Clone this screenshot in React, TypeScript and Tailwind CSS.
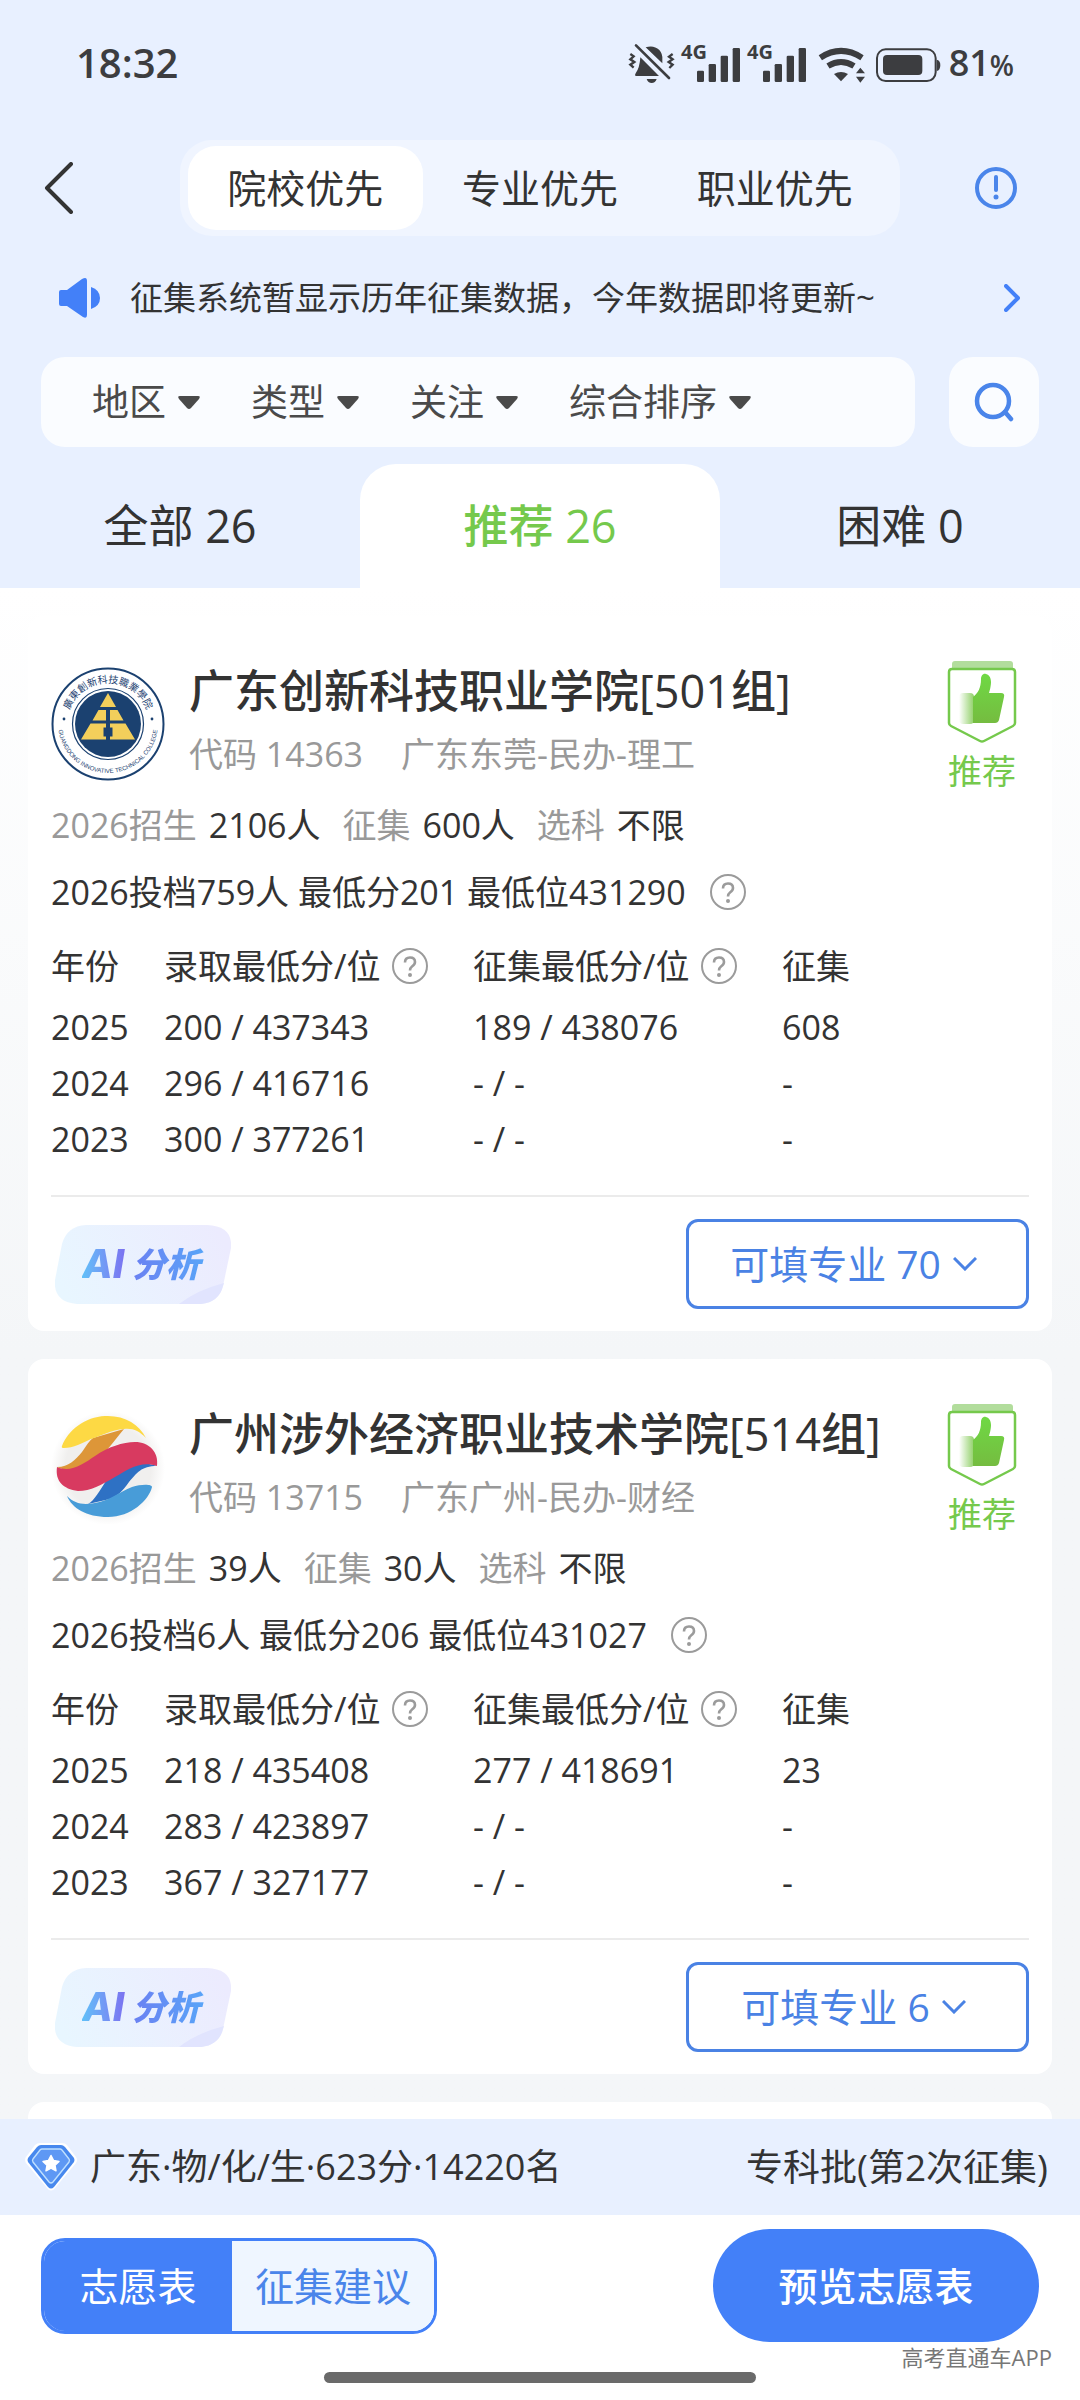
import { useState } from "react"
import type { ReactNode } from "react"
import clsx from "clsx"

type YearRow = {
  year: string
  admitted: string
  collected: string
  count: string
}

type College = {
  name: string
  code: string
  tags: string
  plan: string
  collect: string
  subject: string
  summary: string
  majors: number
  logo: ReactNode
  rows: YearRow[]
}

const COLLEGES: College[] = [
  {
    name: "广东创新科技职业学院[501组]",
    code: "14363",
    tags: "广东东莞-民办-理工",
    plan: "2106人",
    collect: "600人",
    subject: "不限",
    summary: "2026投档759人 最低分201 最低位431290",
    majors: 70,
    logo: <InnovativeLogo />,
    rows: [
      { year: "2025", admitted: "200 / 437343", collected: "189 / 438076", count: "608" },
      { year: "2024", admitted: "296 / 416716", collected: "- / -", count: "-" },
      { year: "2023", admitted: "300 / 377261", collected: "- / -", count: "-" },
    ],
  },
  {
    name: "广州涉外经济职业技术学院[514组]",
    code: "13715",
    tags: "广东广州-民办-财经",
    plan: "39人",
    collect: "30人",
    subject: "不限",
    summary: "2026投档6人 最低分206 最低位431027",
    majors: 6,
    logo: <ForeignEconomicLogo />,
    rows: [
      { year: "2025", admitted: "218 / 435408", collected: "277 / 418691", count: "23" },
      { year: "2024", admitted: "283 / 423897", collected: "- / -", count: "-" },
      { year: "2023", admitted: "367 / 327177", collected: "- / -", count: "-" },
    ],
  },
]

const MODES = ["院校优先", "专业优先", "职业优先"]
const FILTERS = ["地区", "类型", "关注", "综合排序"]
const TABS = [
  { label: "全部", count: 26 },
  { label: "推荐", count: 26 },
  { label: "困难", count: 0 },
]

function StatusIcons() {
  return (
    <svg viewBox="0 0 312 42" className="h-[42px] w-[312px] overflow-visible" fill="#3c3d40" aria-hidden="true">
      <g transform="scale(0.33333) translate(-84 -60)">
        {/* muted bell */}
        <path d="M134 76Q158 68 175 84Q185 95 184 112V124Z" />
        <path d="M118 106L174 162H104Q100 160 104 154Q116 138 118 106Z" />
        <path d="M137 171H167Q163 183 152 183Q141 183 137 171Z" />
        <path d="M105 70L204 168" stroke="#3c3d40" strokeWidth="8" strokeLinecap="round" />
        <path
          d="M88 96L98 103L88 112L100 120L88 128L98 137M215 96L204 104L215 112L203 120L215 128L205 138"
          fill="none"
          stroke="#3c3d40"
          strokeWidth="7"
        />
        {/* signal bars */}
        <rect x="288" y="146" width="21" height="34" rx="4" />
        <rect x="323" y="126" width="22" height="54" rx="4" />
        <rect x="359" y="101" width="22" height="79" rx="4" />
        <rect x="395" y="78" width="22" height="102" rx="4" />
        <rect x="486" y="146" width="21" height="34" rx="4" />
        <rect x="521" y="126" width="22" height="54" rx="4" />
        <rect x="557" y="101" width="22" height="79" rx="4" />
        <rect x="593" y="78" width="22" height="102" rx="4" />
        {/* wifi */}
        <path d="M658 107Q720 66 783 107" fill="none" stroke="#3c3d40" strokeWidth="18" />
        <path d="M681 132Q720 108 759 132" fill="none" stroke="#3c3d40" strokeWidth="18" />
        <path d="M699 156Q720 144 741 156L720 178Z" />
        <path d="M765 154L778 137L792 154ZM765 164L778 182L792 164Z" />
        {/* battery */}
        <rect x="828" y="82" width="176" height="95" rx="26" fill="none" stroke="#3c3d40" strokeWidth="6" />
        <rect x="846" y="99" width="118" height="60" rx="12" />
        <path d="M1007 113Q1018 115 1018 129Q1018 145 1007 147Z" />
      </g>
      <text x="52" y="17" fontSize="20" fontWeight="700">4G</text>
      <text x="118" y="17" fontSize="20" fontWeight="700">4G</text>
    </svg>
  )
}

function InnovativeLogo() {
  return (
    <svg viewBox="-57 -57 114 114" className="size-[114px] shrink-0" role="img" aria-label="校徽">
      <circle r="55.5" fill="#fff" stroke="#1b4170" strokeWidth="2" />
      <circle r="35.5" fill="#fff" stroke="#1b4170" strokeWidth="1.2" />
      <circle r="33" fill="#1b4170" />
      <g fill="#f3cf5b">
        <path d="M0 -31L8 -17H-8Z" />
        <path d="M-9.5 -14H-2V-3.5H-15.5ZM9.5 -14H2V-3.5H15.5Z" />
        <path d="M-17.5 -0.5H-2V3.5H-4.5V12.5H-2V15.5H-27ZM17.5 -0.5H2V3.5H4.5V12.5H2V15.5H27Z" />
      </g>
      <circle cx="-44" cy="-5" r="1.4" fill="#1b4170" />
      <circle cx="44" cy="-5" r="1.4" fill="#1b4170" />
      <path id="ring-top" d="M-41 0A41 41 0 0 1 41 0" fill="none" />
      <path id="ring-bottom" d="M-50 -1A50 50 0 0 0 50 -1" fill="none" />
      <text fontSize="10" fill="#1b4170" textAnchor="middle" fontFamily="'Noto Sans CJK TC', sans-serif">
        <textPath href="#ring-top" startOffset="50%">廣東創新科技職業學院</textPath>
      </text>
      <text fontSize="6" fill="#1b4170" textAnchor="middle" fontFamily="'Liberation Sans', sans-serif">
        <textPath href="#ring-bottom" startOffset="50%">GUANGDONG INNOVATIVE TECHNICAL COLLEGE</textPath>
      </text>
    </svg>
  )
}

function ForeignEconomicLogo() {
  return (
    <svg viewBox="0 0 114 114" className="size-[114px] shrink-0" role="img" aria-label="校徽">
      <defs>
        <radialGradient id="logo-halo">
          <stop offset="0.75" stopColor="#f0efee" />
          <stop offset="1" stopColor="#fff" />
        </radialGradient>
      </defs>
      <circle cx="57" cy="58" r="57" fill="url(#logo-halo)" />
      <path d="M73 19C62 32 56 42 44 51C33 59 18 63 6 57C18 57 24 50 31 42C36 35 38 31 42 28Z" fill="#dd9638" />
      <path d="M11 36C17 20 34 7 54 6C73 5 88 14 95 28C88 21 82 18 73 19C60 20 50 26 40 29C32 33 22 38 13 38Q10 38 11 36Z" fill="#fdd944" />
      <path d="M106 56C90 56 86 63 78 72C71 82 66 86 59 89L37 94C43 91 49 80 55 71C66 59 83 48 106 56Z" fill="#2e71c4" />
      <path d="M6 57C20 63 32 54 44 46C57 37 72 32 84 32C98 32 108 42 106 56C90 50 76 60 64 67C50 75 40 81 27 81C12 79 4 71 6 57Z" fill="#d83a60" />
      <path d="M16 86C24 94 32 95 44 93C60 90 68 82 81 77C90 74 101 74 101 77C98 90 80 107 57 107C35 107 21 98 16 86Z" fill="#489cd8" />
    </svg>
  )
}

function RecommendIcon() {
  return (
    <svg viewBox="0 0 70 82" className="h-[82px] w-[70px]" aria-hidden="true">
      <defs>
        <linearGradient id="thumb" x1="0" y1="0" x2="0" y2="1">
          <stop offset="0" stopColor="#6fd944" />
          <stop offset="1" stopColor="#75bc40" />
        </linearGradient>
        <linearGradient id="thumb-trail">
          <stop offset="0" stopColor="#75c443" stopOpacity="0" />
          <stop offset="1" stopColor="#75c443" stopOpacity="0.8" />
        </linearGradient>
      </defs>
      <path d="M5 7V3Q5 0 8 0H63Q66 0 66 3V7Z" fill="#b2dd9c" />
      <path
        d="M5 8H65Q68 8 68 11V62Q68 64 66 65L37 80Q35 81 33 80L4 65Q2 64 2 62V11Q2 8 5 8Z"
        fill="#fff"
        stroke="#75c94c"
        strokeWidth="2.5"
      />
      <rect x="12" y="32" width="15" height="31" rx="4" fill="url(#thumb-trail)" />
      <path
        d="M26 62V36C31 32 34 27 34 18C34 15 36 12 39 13C43 14 44 18 44 21C44 26 42 32 42 32H54Q58 32 57 36L52 59Q51 62 48 62Z"
        fill="url(#thumb)"
      />
    </svg>
  )
}

function MemberIcon() {
  return (
    <svg viewBox="0 0 54 50" className="h-[50px] w-[54px] shrink-0" aria-hidden="true">
      <path d="M16 1H38Q41 1 43 3L52 15Q54 18 52 21L31 46Q27 51 23 46L2 21Q0 18 2 15L11 3Q13 1 16 1Z" fill="#fff" />
      <path d="M17 3H37Q39 3 41 5L50 16Q51 18 50 20L30 45Q27 48 24 45L4 20Q3 18 4 16L13 5Q15 3 17 3Z" fill="#4788ee" />
      <path
        d="M18 7H36Q37 7 38 8L45 17Q46 18 45 20L29 40Q27 42 25 40L9 20Q8 18 9 17L16 8Q17 7 18 7Z"
        fill="#5e98f4"
        stroke="#bfe0ff"
        strokeWidth="1.4"
      />
      <path
        d="M27 13.5L29.6 18.6L35 19.4L31 23.3L32 28.8L27 26.2L22 28.8L23 23.3L19 19.4L24.4 18.6Z"
        fill="#fff"
        stroke="#fff"
        strokeWidth="1.5"
        strokeLinejoin="round"
      />
    </svg>
  )
}

function HelpButton({ label }: { label: string }) {
  return (
    <button type="button" aria-label={label} className="inline-flex shrink-0">
      <svg viewBox="0 0 36 36" className="size-9" fill="none" stroke="#9b9b9b" strokeWidth="2">
        <circle cx="18" cy="18" r="17" />
        <path d="M13 14.5Q13 9.500 18 9.500Q23 9.500 23 14Q23 16.500 20 18.500Q18 20 18 22.500" strokeWidth="2.600" />
        <circle cx="18" cy="27" r="2" fill="#9b9b9b" stroke="none" />
      </svg>
    </button>
  )
}

function AiButton() {
  return (
    <button type="button" className="relative ml-1 flex h-20 w-44 items-center justify-center gap-1 italic">
      <svg viewBox="0 0 176 80" className="absolute inset-0 size-full" aria-hidden="true">
        <defs>
          <linearGradient id="ai-bg" x1="0" y1="0.6" x2="1" y2="0.4">
            <stop offset="0" stopColor="#e8f6ff" />
            <stop offset="1" stopColor="#ecebfe" />
          </linearGradient>
        </defs>
        <path d="M31 1H152Q178 2 176 24L168 62Q164 78 146 80H22Q-2 78 0 56L7 20Q12 2 31 1Z" fill="url(#ai-bg)" />
        <path d="M124 80Q142 66 169 59L168 62Q164 78 146 80Z" fill="#e1e4fe" />
      </svg>
      <span className="relative bg-linear-to-r from-[#5fc0f8] to-[#7b6cf0] bg-clip-text pr-1 font-['Inter',sans-serif] text-[40px] leading-[52px] font-extrabold text-transparent">
        AI
      </span>
      <span className="relative bg-linear-to-r from-[#6a80f2] to-[#58a4f8] bg-clip-text pr-1 text-[34px] leading-[52px] font-black text-transparent">
        分析
      </span>
    </button>
  )
}

function CollegeCard({ college }: { college: College }) {
  return (
    <article className="rounded-2xl bg-white px-[23px] pt-[45px] pb-[22px]">
      <div className="flex items-start justify-between">
        <div className="flex items-center gap-6">
          {college.logo}
          <div>
            <h2 className="text-[45px] leading-[60px] font-medium">{college.name}</h2>
            <p className="flex gap-[38px] leading-[66px] text-[#999]">
              <span>代码 {college.code}</span>
              <span>{college.tags}</span>
            </p>
          </div>
        </div>
        <div className="mr-3 flex flex-col items-center text-[#75c94c]">
          <RecommendIcon />
          <span className="leading-[56px]">推荐</span>
        </div>
      </div>

      <dl className="flex gap-[22px] leading-[52px]">
        <div className="flex gap-3">
          <dt className="text-[#999]">2026招生</dt>
          <dd>{college.plan}</dd>
        </div>
        <div className="flex gap-3">
          <dt className="text-[#999]">征集</dt>
          <dd>{college.collect}</dd>
        </div>
        <div className="flex gap-3">
          <dt className="text-[#999]">选科</dt>
          <dd>{college.subject}</dd>
        </div>
      </dl>

      <p className="flex h-[82px] items-center gap-6">
        {college.summary}
        <HelpButton label="投档说明" />
      </p>

      <table className="w-full table-fixed text-left">
        <thead>
          <tr className="h-[66px]">
            <th className="w-[113px] font-normal">年份</th>
            <th className="w-[309px] font-normal">
              <span className="flex items-center gap-3">
                录取最低分/位
                <HelpButton label="录取说明" />
              </span>
            </th>
            <th className="w-[309px] font-normal">
              <span className="flex items-center gap-3">
                征集最低分/位
                <HelpButton label="征集说明" />
              </span>
            </th>
            <th className="font-normal">征集</th>
          </tr>
        </thead>
        <tbody>
          {college.rows.map((row) => (
            <tr key={row.year} className="h-14">
              <td>{row.year}</td>
              <td>{row.admitted}</td>
              <td>{row.collected}</td>
              <td>{row.count}</td>
            </tr>
          ))}
        </tbody>
      </table>

      <div className="mt-7 flex items-center justify-between border-t-2 border-[#ebebeb] pt-[22px]">
        <AiButton />
        <button
          type="button"
          className="flex h-[90px] w-[343px] items-center justify-center gap-3 rounded-xl border-3 border-[#4a82e4] pr-2 text-[39px] text-[#4a82e4]"
        >
          可填专业 {college.majors}
          <svg viewBox="0 0 24 14" className="h-[14px] w-6" fill="none" stroke="currentColor" strokeWidth="3">
            <path d="M1 1L12 12L23 1" />
          </svg>
        </button>
      </div>
    </article>
  )
}

export default function App() {
  const [mode, setMode] = useState(MODES[0])
  const [tab, setTab] = useState("推荐")

  return (
    <div className="flex h-screen flex-col overflow-hidden bg-[#f4f6f8] font-['Open_Sans','Noto_Sans_CJK_SC',sans-serif] text-[34px] leading-[52px] text-[#333]">
      <header className="shrink-0 bg-[#e8f0ff]">
        {/* Status bar */}
        <div className="flex h-[126px] items-center justify-between pr-[66px] pl-[76px] text-[#3c3d40]">
          <span className="text-[40px] font-semibold">18:32</span>
          <div className="flex items-center gap-2">
            <StatusIcons />
            <span className="flex items-baseline text-4xl font-semibold">
              81<span className="text-[28px]">%</span>
            </span>
          </div>
        </div>

        {/* Mode switch */}
        <nav className="grid h-[124px] grid-cols-[1fr_4fr_1fr] items-center">
          <button type="button" aria-label="返回" className="pl-11">
            <svg viewBox="0 0 30 52" className="h-[52px] w-[30px]" fill="none" stroke="#333" strokeWidth="4" strokeLinecap="round" strokeLinejoin="round">
              <path d="M27 2L3 26L27 50" />
            </svg>
          </button>
          <div className="flex h-24 rounded-[32px] bg-[#f0f5ff] px-2 py-[6px]">
            {MODES.map((item) => (
              <button
                key={item}
                type="button"
                onClick={() => setMode(item)}
                className={clsx("flex-1 rounded-[28px] text-[39px]", item === mode && "bg-white")}
              >
                {item}
              </button>
            ))}
          </div>
          <button type="button" aria-label="说明" className="flex justify-end pr-[62px]">
            <svg viewBox="0 0 44 44" className="size-11" fill="none" stroke="#4a85ea" strokeWidth="4" strokeLinecap="round">
              <circle cx="22" cy="22" r="19" />
              <path d="M22 11V24" />
              <circle cx="22" cy="31" r="2.500" fill="#4a85ea" stroke="none" />
            </svg>
          </button>
        </nav>

        {/* Notice */}
        <a href="#notice" className="flex h-24 items-center pr-[60px] pl-[58px] text-[33px]">
          <svg viewBox="0 0 42 42" className="mr-[30px] size-[42px]" fill="#4380f8" aria-hidden="true">
            <path d="M3 13H9L24 2Q29 -1 29 4V38Q29 42 25 40L9 29H3Q1 29 1 27V15Q1 13 3 13Z" />
            <path d="M33 10Q42 13 42 21Q42 29 33 32Z" />
          </svg>
          <span className="flex-1">征集系统暂显示历年征集数据，今年数据即将更新~</span>
          <svg viewBox="0 0 16 28" className="h-7 w-4" fill="none" stroke="#4380f8" strokeWidth="4" strokeLinecap="round" strokeLinejoin="round">
            <path d="M2 2L14 14L2 26" />
          </svg>
        </a>

        {/* Filters */}
        <div className="mt-[11px] flex gap-[34px] px-[41px]">
          <div className="flex h-[90px] flex-1 items-center gap-[51px] rounded-3xl bg-[#fafcff] pl-[51px] text-[37px] text-[#4a4a4a]">
            {FILTERS.map((item) => (
              <label key={item} className="flex items-center gap-3">
                <select aria-label={item} className="appearance-none bg-transparent">
                  <option>{item}</option>
                </select>
                <svg viewBox="0 0 22 13" className="h-[13px] w-[22px]" fill="currentColor" aria-hidden="true">
                  <path d="M2 0H20Q23 0 21 3L13 12Q11 14 9 12L1 3Q-1 0 2 0Z" />
                </svg>
              </label>
            ))}
          </div>
          <button type="button" aria-label="搜索" className="flex h-[90px] w-[90px] items-center justify-center rounded-3xl bg-[#fafcff]">
            <svg viewBox="0 0 40 40" className="size-10" fill="none" stroke="#4a85ea" strokeWidth="4.5" strokeLinecap="round">
              <circle cx="19" cy="19" r="16" />
              <path d="M31 30L37 37" />
            </svg>
          </button>
        </div>

        {/* Tabs */}
        <div role="tablist" className="mt-[17px] grid grid-cols-3">
          {TABS.map(({ label, count }) => (
            <button
              key={label}
              type="button"
              role="tab"
              aria-selected={label === tab}
              onClick={() => setTab(label)}
              className={clsx(
                "h-[124px] rounded-t-[36px] text-[45px]",
                label === tab && "bg-white font-medium text-[#75c94c]"
              )}
            >
              {label} {count}
            </button>
          ))}
        </div>
      </header>

      <main className="min-h-0 flex-1 overflow-y-auto bg-linear-to-b from-white to-[#f4f6f8] to-50% px-7 pt-7 [scrollbar-width:none]">
        <div className="flex flex-col gap-7">
          {COLLEGES.map((college) => (
            <CollegeCard key={college.code} college={college} />
          ))}
          <div className="h-20 rounded-2xl bg-white" />
        </div>
      </main>

      <footer className="shrink-0 bg-white">
        <div className="flex h-24 items-center justify-between bg-[#e8f0ff] pr-8 pl-6">
          <p className="flex items-center gap-3 text-4xl leading-[52px]">
            <MemberIcon />
            广东·物/化/生·623分·14220名
          </p>
          <p className="text-[37px]">专科批(第2次征集)</p>
        </div>
        <div className="flex items-center justify-between px-[41px] pt-[14px] text-[39px]">
          <div className="flex h-24 overflow-hidden rounded-3xl border-3 border-[#4380f8]">
            <button type="button" className="w-[188px] bg-[#4380f8] text-white">志愿表</button>
            <button type="button" className="w-[202px] bg-[#eff6ff] text-[#4a85ea]">征集建议</button>
          </div>
          <button type="button" className="h-[113px] w-[326px] rounded-full bg-[#4380f8] font-medium text-white">
            预览志愿表
          </button>
        </div>
        <p className="px-7 text-right text-[22px] leading-[30px] text-[#777]">高考直通车APP</p>
        <div className="mx-auto mb-[17px] h-[11px] w-2/5 rounded-full bg-[#6a6a6a]" />
      </footer>
    </div>
  )
}
